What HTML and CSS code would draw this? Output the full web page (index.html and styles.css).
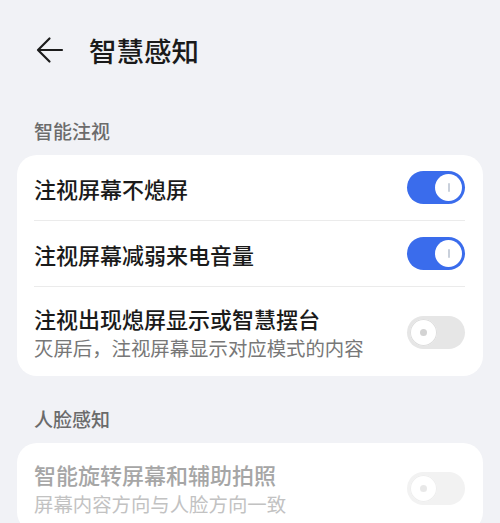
FILE: index.html
```html
<!DOCTYPE html>
<html lang="zh-CN">
<head>
<meta charset="utf-8">
<title>智慧感知</title>
<link rel="stylesheet" href="styles.css">
</head>
<body>
<div class="page">
  <header class="topbar">
    <svg class="back" width="28" height="28" viewBox="0 0 28 28" aria-hidden="true">
      <path d="M26 14H2.5M13.5 2.5L2 14l11.5 11.5" fill="none" stroke="#1c1c1c" stroke-width="2.2" stroke-linecap="round" stroke-linejoin="round"/>
    </svg>
    <h1 class="title">智慧感知</h1>
  </header>

  <div class="section-title">智能注视</div>
  <div class="card">
    <div class="row">
      <div class="row-text"><div class="row-title">注视屏幕不熄屏</div></div>
      <span class="toggle on"><span class="knob"></span></span>
    </div>
    <div class="row">
      <div class="row-text"><div class="row-title">注视屏幕减弱来电音量</div></div>
      <span class="toggle on"><span class="knob"></span></span>
    </div>
    <div class="row row-tall">
      <div class="row-text">
        <div class="row-title">注视出现熄屏显示或智慧摆台</div>
        <div class="row-sub">灭屏后，注视屏幕显示对应模式的内容</div>
      </div>
      <span class="toggle off"><span class="knob"></span></span>
    </div>
  </div>

  <div class="section-title second">人脸感知</div>
  <div class="card disabled">
    <div class="row row-tall">
      <div class="row-text">
        <div class="row-title">智能旋转屏幕和辅助拍照</div>
        <div class="row-sub">屏幕内容方向与人脸方向一致</div>
      </div>
      <span class="toggle off"><span class="knob"></span></span>
    </div>
  </div>
</div>
</body>
</html>
```

FILE: styles.css
```css
html, body {
  margin: 0;
  padding: 0;
  background: #f1f2f6;
}
body {
  font-family: "Noto Sans CJK SC", "Noto Sans", sans-serif;
  color: #1a1a1a;
}
.page {
  padding: 0 17px;
}
.topbar {
  height: 100px;
  display: flex;
  align-items: center;
  padding-left: 36px;
  margin: 0 -17px;
}
.back {
  display: block;
  margin-right: 25px;
}
.title {
  margin: 0;
  font-size: 27.5px;
  font-weight: 500;
  line-height: 36px;
  color: #1a1a1a;
}
.section-title {
  padding: 19px 17px 12px;
  font-size: 19px;
  line-height: 24px;
  color: #6b6b6b;
  font-weight: 500;
}
.section-title.second {
  padding-top: 20px;
}
.card {
  background: #ffffff;
  border-radius: 20px;
  padding: 0 18px 0 17px;
  margin-bottom: 11px;
}
.row {
  display: flex;
  align-items: center;
  justify-content: space-between;
  min-height: 65px;
  border-bottom: 1px solid #ebebeb;
}
.row:last-child {
  border-bottom: none;
}
.row-tall {
  min-height: 0;
  padding: 16px 0 15px;
}
.row-title {
  font-size: 22px;
  line-height: 30px;
  font-weight: 500;
  color: #1a1a1a;
}
.row-sub {
  margin-top: 2px;
  font-size: 19.4px;
  line-height: 26px;
  color: #777777;
}
.toggle {
  position: relative;
  flex: none;
  width: 58px;
  height: 33px;
  border-radius: 17px;
  box-sizing: border-box;
}
.toggle.on {
  background: #3a6cec;
}
.toggle.off {
  background: #e6e6e6;
}
.knob {
  position: absolute;
  top: 3px;
  width: 27px;
  height: 27px;
  border-radius: 50%;
  background: #ffffff;
}
.toggle.on .knob {
  right: 3px;
}
.toggle.on .knob::after {
  content: "";
  position: absolute;
  left: 12.5px;
  top: 9px;
  width: 2px;
  height: 9px;
  border-radius: 1px;
  background: #c9d0db;
}
.toggle.off .knob {
  left: 3px;
  box-shadow: 0 0 0 1px #dedede inset;
}
.toggle.off .knob::after {
  content: "";
  position: absolute;
  left: 10px;
  top: 10px;
  width: 7px;
  height: 7px;
  border-radius: 50%;
  background: #d3d3d3;
}
.card.disabled .row-title {
  color: #a6a6a6;
}
.card.disabled .row-sub {
  color: #c2c2c2;
}
.card.disabled .toggle {
  opacity: 0.5;
}
```
